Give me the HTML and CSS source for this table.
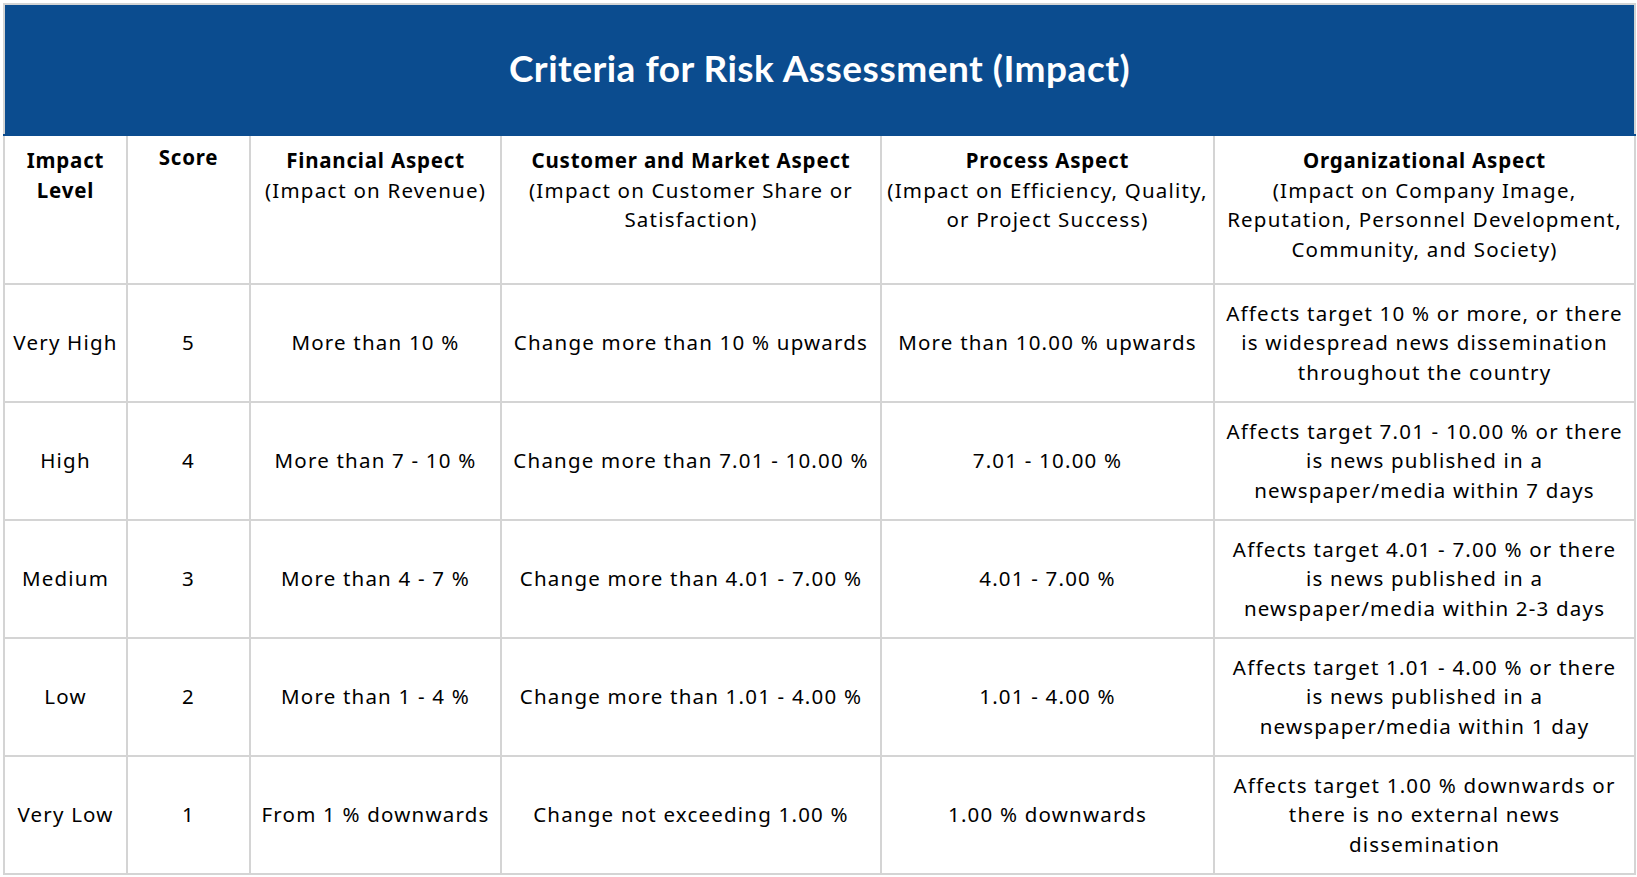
FILE: index.html
```html
<!DOCTYPE html>
<html lang="en">
<head>
<meta charset="utf-8">
<title>Criteria for Risk Assessment (Impact)</title>
<link rel="stylesheet" href="styles.css">
</head>
<body>
<table class="risk">
  <colgroup>
    <col class="c-level">
    <col class="c-score">
    <col class="c-fin">
    <col class="c-cust">
    <col class="c-proc">
    <col class="c-org">
  </colgroup>
  <thead>
    <tr class="title-row">
      <th colspan="6" class="title">Criteria for Risk Assessment (Impact)</th>
    </tr>
    <tr class="head-row">
      <th><b>Impact<br>Level</b></th>
      <th class="score-h"><b>Score</b></th>
      <th><b>Financial Aspect</b><br>(Impact on Revenue)</th>
      <th><b>Customer and Market Aspect</b><br>(Impact on Customer Share or<br>Satisfaction)</th>
      <th><b>Process Aspect</b><br>(Impact on Efficiency, Quality,<br>or Project Success)</th>
      <th><b>Organizational Aspect</b><br>(Impact on Company Image,<br>Reputation, Personnel Development,<br>Community, and Society)</th>
    </tr>
  </thead>
  <tbody>
    <tr>
      <td>Very High</td>
      <td>5</td>
      <td>More than 10 %</td>
      <td>Change more than 10 % upwards</td>
      <td>More than 10.00 % upwards</td>
      <td>Affects target 10 % or more, or there<br>is widespread news dissemination<br>throughout the country</td>
    </tr>
    <tr>
      <td>High</td>
      <td>4</td>
      <td>More than 7 - 10 %</td>
      <td>Change more than 7.01 - 10.00 %</td>
      <td>7.01 - 10.00 %</td>
      <td>Affects target 7.01 - 10.00 % or there<br>is news published in a<br>newspaper/media within 7 days</td>
    </tr>
    <tr>
      <td>Medium</td>
      <td>3</td>
      <td>More than 4 - 7 %</td>
      <td>Change more than 4.01 - 7.00 %</td>
      <td>4.01 - 7.00 %</td>
      <td>Affects target 4.01 - 7.00 % or there<br>is news published in a<br>newspaper/media within 2-3 days</td>
    </tr>
    <tr>
      <td>Low</td>
      <td>2</td>
      <td>More than 1 - 4 %</td>
      <td>Change more than 1.01 - 4.00 %</td>
      <td>1.01 - 4.00 %</td>
      <td>Affects target 1.01 - 4.00 % or there<br>is news published in a<br>newspaper/media within 1 day</td>
    </tr>
    <tr>
      <td>Very Low</td>
      <td>1</td>
      <td>From 1 % downwards</td>
      <td>Change not exceeding 1.00 %</td>
      <td>1.00 % downwards</td>
      <td>Affects target 1.00 % downwards or<br>there is no external news<br>dissemination</td>
    </tr>
  </tbody>
</table>
</body>
</html>
```
FILE: styles.css
```css
html, body {
  margin: 0;
  padding: 0;
  background: #ffffff;
}

body {
  padding: 3px 3px 0 3px;
  font-family: "Noto Sans", "Lato", sans-serif;
  color: #000000;
}

.risk {
  width: 1631px;
  border-collapse: collapse;
  table-layout: fixed;
  border: 2px solid #d4d4d4;
}

.c-level { width: 123px; }
.c-score { width: 123px; }
.c-fin   { width: 251px; }
.c-cust  { width: 380px; }
.c-proc  { width: 333px; }
.c-org   { width: 421px; }

.risk th,
.risk td {
  border: 2px solid #d4d4d4;
  text-align: center;
  font-size: 20.5px;
  line-height: 29.5px;
  padding: 0;
  letter-spacing: 1.2px;
  white-space: nowrap;
}

.title-row { height: 131px; }

.risk th.title {
  background: #0b4c8f;
  color: #ffffff;
  font-family: "Lato", "Noto Sans", sans-serif;
  font-size: 37px;
  font-weight: 700;
  letter-spacing: 0.5px;
  border-color: #0b4c8f;
  border-top-color: #d4d4d4;
  border-left-color: #d4d4d4;
  border-right-color: #d4d4d4;
  padding: 0 0 4px 0;
}

.head-row { height: 149px; }

.head-row th {
  vertical-align: top;
  font-weight: 400;
  padding-top: 10px;
}

.head-row th b {
  font-weight: 700;
  letter-spacing: 0.8px;
}

.head-row th.score-h { padding-top: 7px; }

.risk tbody tr { height: 118px; }

.risk tbody td { vertical-align: middle; }
```
